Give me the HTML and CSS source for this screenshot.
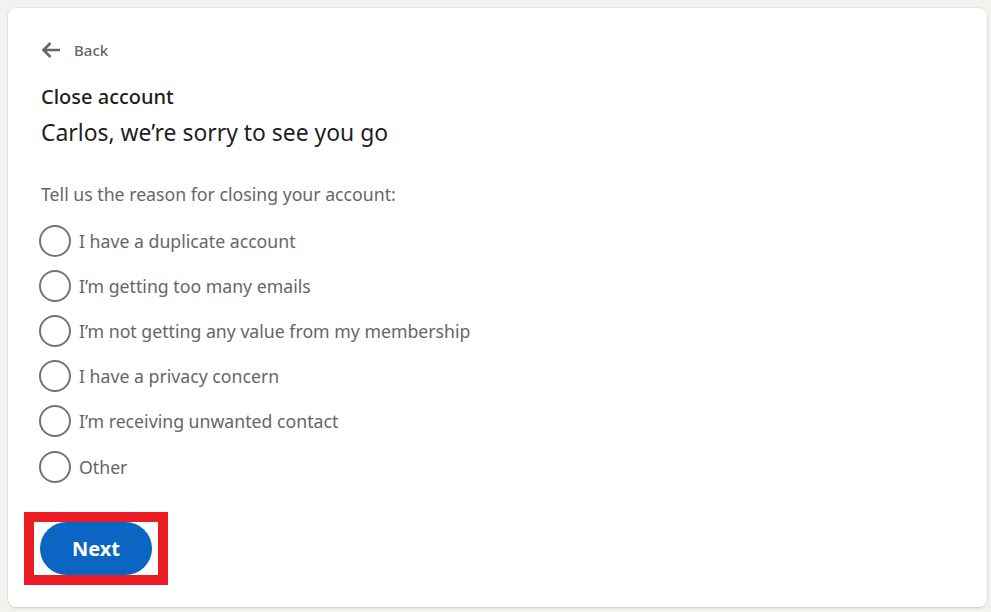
FILE: index.html
```html
<!DOCTYPE html>
<html lang="en">
<head>
<meta charset="utf-8">
<title>Close account</title>
<link rel="stylesheet" href="styles.css">
</head>
<body>
<main class="card">
  <a class="back" href="#">
    <svg class="back-icon" viewBox="0 0 24 24" width="24" height="24" aria-hidden="true">
      <path d="M21 12H4.5M11.5 5l-7 7 7 7" fill="none" stroke="currentColor" stroke-width="2.6" stroke-linejoin="miter"/>
    </svg>
    <span>Back</span>
  </a>
  <h1 class="title">Close account</h1>
  <h2 class="subtitle">Carlos, we’re sorry to see you go</h2>
  <p class="prompt">Tell us the reason for closing your account:</p>
  <ul class="options">
    <li class="option"><span class="radio"></span><span class="label">I have a duplicate account</span></li>
    <li class="option"><span class="radio"></span><span class="label">I’m getting too many emails</span></li>
    <li class="option"><span class="radio"></span><span class="label">I’m not getting any value from my membership</span></li>
    <li class="option"><span class="radio"></span><span class="label">I have a privacy concern</span></li>
    <li class="option"><span class="radio"></span><span class="label">I’m receiving unwanted contact</span></li>
    <li class="option"><span class="radio"></span><span class="label">Other</span></li>
  </ul>
  <div class="highlight">
    <button class="next" type="button">Next</button>
  </div>
</main>
</body>
</html>
```

FILE: styles.css
```css
html, body {
  margin: 0;
  padding: 0;
  background: #f3f2ef;
}
body {
  padding: 8px 4px 5px 8px;
  font-family: "Noto Sans", "Open Sans", sans-serif;
  color: rgba(0, 0, 0, 0.9);
}
.card {
  display: flex;
  flex-direction: column;
  align-items: flex-start;
  height: 599px;
  box-sizing: border-box;
  background: #fff;
  border-radius: 8px;
  box-shadow: 0 0 0 1px rgba(0, 0, 0, 0.06), 0 2px 2px rgba(0, 0, 0, 0.06);
  padding: 30px 33px 0 33px;
}
.back {
  display: flex;
  align-items: center;
  gap: 11px;
  height: 24px;
  margin-left: -2px;
  color: #666;
  text-decoration: none;
  font-size: 15px;
  font-weight: 500;
}
.back-icon {
  display: block;
  color: #666;
}
.title {
  margin: 21px 0 0;
  font-size: 20px;
  line-height: 28px;
  font-weight: 500;
}
.subtitle {
  margin: 7px 0 0;
  font-size: 22.9px;
  line-height: 30px;
  font-weight: 400;
}
.prompt {
  margin: 34px 0 0;
  font-size: 17.7px;
  line-height: 24px;
  color: #666;
}
.options {
  list-style: none;
  margin: 12px 0 0;
  padding: 0;
}
.option {
  display: flex;
  align-items: center;
  height: 45.2px;
  gap: 8px;
  margin-left: -2px;
}
.radio {
  width: 32px;
  height: 32px;
  box-sizing: border-box;
  border: 2px solid #747474;
  border-radius: 50%;
  flex: none;
}
.label {
  font-size: 17.7px;
  line-height: 24px;
  color: #666;
}
.highlight {
  margin: 23px 0 0 -17px;
  border: 10px solid #ec1c24;
  padding: 0 6px;
  background: #fff;
}
.next {
  display: block;
  width: 112px;
  height: 53px;
  border: 0;
  border-radius: 27px;
  background: #0a66c2;
  color: #fff;
  font-family: "Noto Sans", "Open Sans", sans-serif;
  font-size: 20px;
  font-weight: 700;
  cursor: pointer;
}
```
